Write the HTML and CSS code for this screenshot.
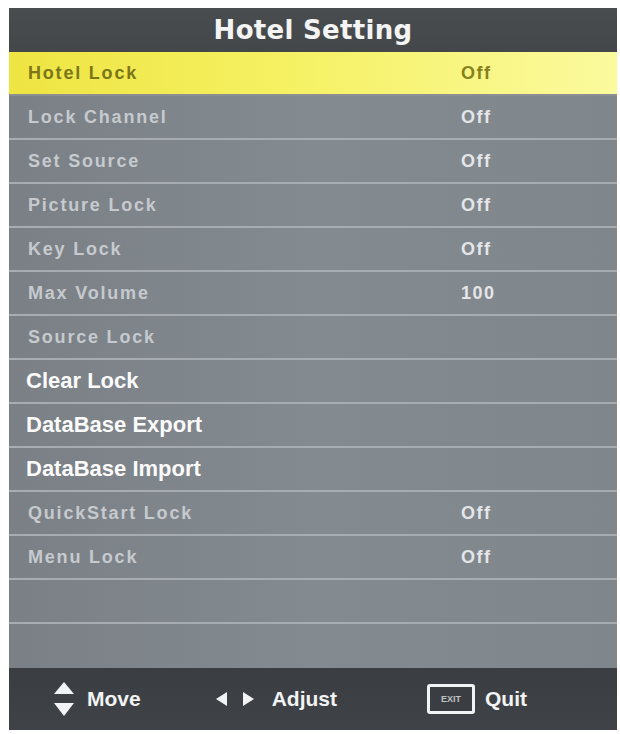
FILE: index.html
```html
<!DOCTYPE html>
<html>
<head>
<meta charset="utf-8">
<link rel="stylesheet" href="styles.css">
</head>
<body>
<div class="panel">
  <div class="header">Hotel Setting</div>
  <div class="list">
    <div class="row sel"><span class="label">Hotel Lock</span><span class="value">Off</span></div>
    <div class="row"><span class="label">Lock Channel</span><span class="value">Off</span></div>
    <div class="row"><span class="label">Set Source</span><span class="value">Off</span></div>
    <div class="row"><span class="label">Picture Lock</span><span class="value">Off</span></div>
    <div class="row"><span class="label">Key Lock</span><span class="value">Off</span></div>
    <div class="row"><span class="label">Max Volume</span><span class="value">100</span></div>
    <div class="row"><span class="label">Source Lock</span><span class="value"></span></div>
    <div class="row act"><span class="label">Clear Lock</span><span class="value"></span></div>
    <div class="row act"><span class="label">DataBase Export</span><span class="value"></span></div>
    <div class="row act"><span class="label">DataBase Import</span><span class="value"></span></div>
    <div class="row"><span class="label">QuickStart Lock</span><span class="value">Off</span></div>
    <div class="row"><span class="label">Menu Lock</span><span class="value">Off</span></div>
    <div class="row"></div>
    <div class="row last"></div>
  </div>
  <div class="footer">
    <div class="hint move">
      <svg class="ud" width="22" height="36" viewBox="0 0 22 36"><path d="M11 1 L21 13 L1 13 Z" fill="#f2f3f4"/><path d="M1 22 L21 22 L11 35 Z" fill="#f2f3f4"/></svg>
      <span>Move</span>
    </div>
    <div class="hint adjust">
      <svg class="lr" width="40" height="16" viewBox="0 0 40 16"><path d="M12 1 L12 15 L1 8 Z" fill="#f2f3f4"/><path d="M28 1 L39 8 L28 15 Z" fill="#f2f3f4"/></svg>
      <span>Adjust</span>
    </div>
    <div class="hint quit">
      <span class="exit">EXIT</span>
      <span>Quit</span>
    </div>
  </div>
</div>
</body>
</html>
```
FILE: styles.css
```css
html, body {
  margin: 0;
  padding: 0;
  background: #ffffff;
}
body {
  padding: 8px 3px 4px 9px;
  font-family: "Liberation Sans", Arial, sans-serif;
}
.panel {
  width: 608px;
  display: flex;
  flex-direction: column;
  background: #7e848a;
}
.header {
  height: 44px;
  background: linear-gradient(180deg, #4a4d50, #43474a);
  color: #f4f4f4;
  font-family: "DejaVu Sans", sans-serif;
  font-weight: bold;
  font-size: 26px;
  display: flex;
  align-items: center;
  justify-content: center;
  letter-spacing: 0.3px;
}
.list {
  display: flex;
  flex-direction: column;
  background: linear-gradient(90deg, #7a8086, #838a90 50%, #7f868c);
}
.row {
  height: 42px;
  border-bottom: 2px solid #a7acb1;
  display: flex;
  align-items: center;
  padding-left: 19px;
  font-weight: bold;
  font-size: 18px;
  letter-spacing: 1.8px;
  color: #c6cace;
}
.row.last {
  border-bottom: none;
  height: 44px;
}
.row .label {
  width: 433px;
  flex: none;
}
.row .value {
  color: #e4e6e8;
  letter-spacing: 1.5px;
}
.row.sel {
  background: linear-gradient(90deg, #eee442, #f5f162 45%, #fbfa9e);
  border-bottom-color: #8b8f93;
  color: #7a7619;
}
.row.sel .value {
  color: #85811c;
}
.row.act {
  color: #fbfbfb;
  font-size: 22px;
  letter-spacing: 0;
  padding-left: 17px;
}
.footer {
  height: 62px;
  background: linear-gradient(180deg, #3a3e42, #3f4347);
  display: flex;
  align-items: center;
  color: #f2f3f4;
  font-weight: bold;
  font-size: 21px;
}
.hint {
  display: flex;
  align-items: center;
}
.move {
  margin-left: 44px;
  gap: 12px;
}
.adjust {
  margin-left: 74px;
  gap: 17px;
}
.quit {
  margin-left: 90px;
  gap: 10px;
}
.exit {
  display: inline-flex;
  align-items: center;
  justify-content: center;
  width: 42px;
  height: 24px;
  border: 3px solid #f2f3f4;
  border-radius: 3px;
  font-size: 9px;
  letter-spacing: 0;
  color: #c0c2c4;
  background: #3a3e42;
}
```
